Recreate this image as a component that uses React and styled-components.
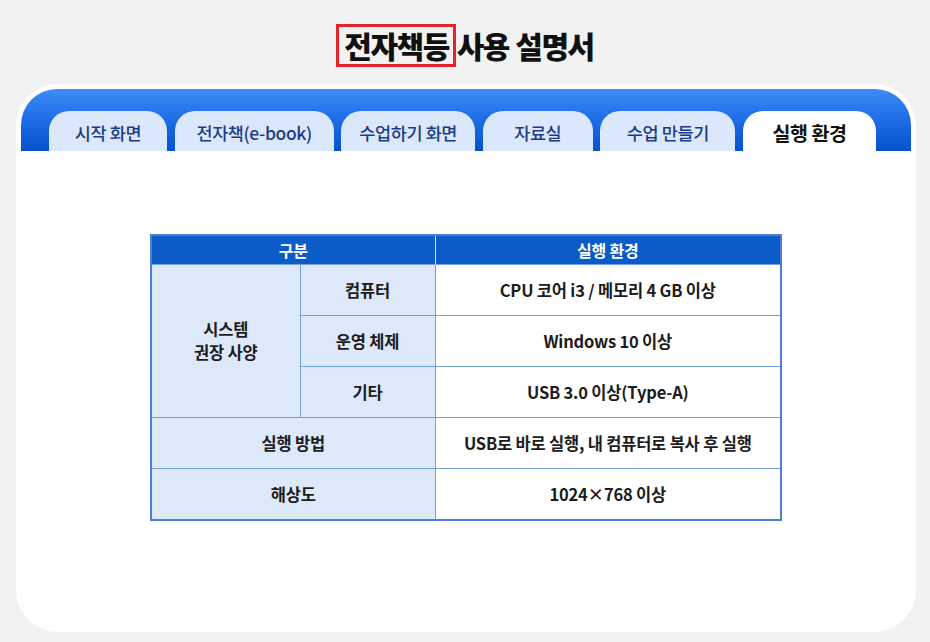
import React from 'react';
import styled, { createGlobalStyle } from 'styled-components';

const tabs = [
  { label: '시작 화면', w: 118 },
  { label: '전자책(e-book)', w: 159 },
  { label: '수업하기 화면', w: 134 },
  { label: '자료실', w: 110 },
  { label: '수업 만들기', w: 135 },
  { label: '실행 환경', w: 133, active: true },
];

const App = () => {
  return (
    <>
      <GlobalStyle />
      <Page>
        <TitleRow>
          <Highlight>전자책등</Highlight>
          <TitleRest>사용 설명서</TitleRest>
        </TitleRow>
        <Card>
          <TabBar>
            {tabs.map((t) => (
              <Tab key={t.label} $w={t.w} $active={t.active}>
                {t.label}
              </Tab>
            ))}
          </TabBar>
          <Body>
            <SpecTable>
              <colgroup>
                <col style={{ width: 149 }} />
                <col style={{ width: 135 }} />
                <col />
              </colgroup>
              <thead>
                <tr>
                  <HeadCell colSpan={2}>구분</HeadCell>
                  <HeadCell>실행 환경</HeadCell>
                </tr>
              </thead>
              <tbody>
                <tr>
                  <LabelCell rowSpan={3}>
                    <Line>시스템</Line>
                    <Line>권장 사양</Line>
                  </LabelCell>
                  <LabelCell>컴퓨터</LabelCell>
                  <ValueCell>CPU 코어 i3 / 메모리 4 GB 이상</ValueCell>
                </tr>
                <tr>
                  <LabelCell>운영 체제</LabelCell>
                  <ValueCell>Windows 10 이상</ValueCell>
                </tr>
                <tr>
                  <LabelCell>기타</LabelCell>
                  <ValueCell>USB 3.0 이상(Type-A)</ValueCell>
                </tr>
                <tr>
                  <LabelCell colSpan={2}>실행 방법</LabelCell>
                  <ValueCell>USB로 바로 실행, 내 컴퓨터로 복사 후 실행</ValueCell>
                </tr>
                <tr>
                  <LabelCell colSpan={2}>해상도</LabelCell>
                  <ValueCell>1024×768 이상</ValueCell>
                </tr>
              </tbody>
            </SpecTable>
          </Body>
        </Card>
      </Page>
    </>
  );
};

export default App;

const GlobalStyle = createGlobalStyle`
  body {
    margin: 0;
    background: #f2f2f2;
    font-family: "Noto Sans CJK KR", "Noto Sans", sans-serif;
  }
`;

const Page = styled.div`
  width: 930px;
  height: 642px;
  padding-top: 24px;
  box-sizing: border-box;
  overflow: hidden;
`;

const TitleRow = styled.h1`
  margin: 0;
  height: 43px;
  display: flex;
  justify-content: center;
  align-items: center;
  gap: 1px;
  font-size: 30px;
  font-weight: 900;
  letter-spacing: -1.5px;
  color: #111;
`;

const Highlight = styled.span`
  display: flex;
  align-items: center;
  height: 43px;
  padding: 0 4px 2px 5px;
  box-sizing: border-box;
  border: 3px solid #e3222b;
`;

const TitleRest = styled.span`
  padding-bottom: 2px;
  word-spacing: 1px;
`;

const Card = styled.div`
  margin: 17px 14px 0 16px;
  height: 548px;
  background: #fff;
  border-radius: 42px;
  padding: 5px 5px 0;
  box-sizing: border-box;
`;

const TabBar = styled.div`
  height: 62px;
  border-radius: 36px 36px 0 0;
  background: linear-gradient(180deg, #3d8cf6 0%, #1e6ce6 50%, #0552cc 100%);
  display: flex;
  align-items: flex-end;
  gap: 7.6px;
  padding-left: 28px;
`;

const Tab = styled.div`
  width: ${(p) => p.$w}px;
  height: 40px;
  flex-shrink: 0;
  border-radius: 20px 20px 0 0;
  background: ${(p) => (p.$active ? '#ffffff' : '#dbe8fc')};
  color: ${(p) => (p.$active ? '#111' : '#1b3b88')};
  font-size: ${(p) => (p.$active ? '19.5px' : '17.5px')};
  font-weight: ${(p) => (p.$active ? 700 : 500)};
  display: flex;
  align-items: center;
  justify-content: center;
  letter-spacing: -0.4px;
  padding-top: 3px;
  box-sizing: border-box;
`;

const Body = styled.div`
  display: flex;
  justify-content: center;
  padding-top: 83px;
`;

const SpecTable = styled.table`
  width: 632px;
  border-collapse: collapse;
  table-layout: fixed;
  border: 2px solid #4c7fd0;
  font-size: 16.5px;
  font-weight: 700;
  color: #1c1c1c;
  letter-spacing: -0.2px;
`;

const HeadCell = styled.th`
  height: 28px;
  padding: 0;
  background: #0b5cc6;
  color: #fff;
  font-weight: 700;
  font-size: 16px;
  border-left: 1px solid #d8e4f6;
  &:first-child {
    border-left: none;
  }
`;

const LabelCell = styled.td`
  height: 50px;
  padding: 0;
  text-align: center;
  background: #dde9fa;
  border: 1px solid #73a0e0;
`;

const Line = styled.div`
  line-height: 23px;
`;

const ValueCell = styled.td`
  height: 50px;
  padding: 0;
  text-align: center;
  background: #fff;
  border: 1px solid #73a0e0;
`;
